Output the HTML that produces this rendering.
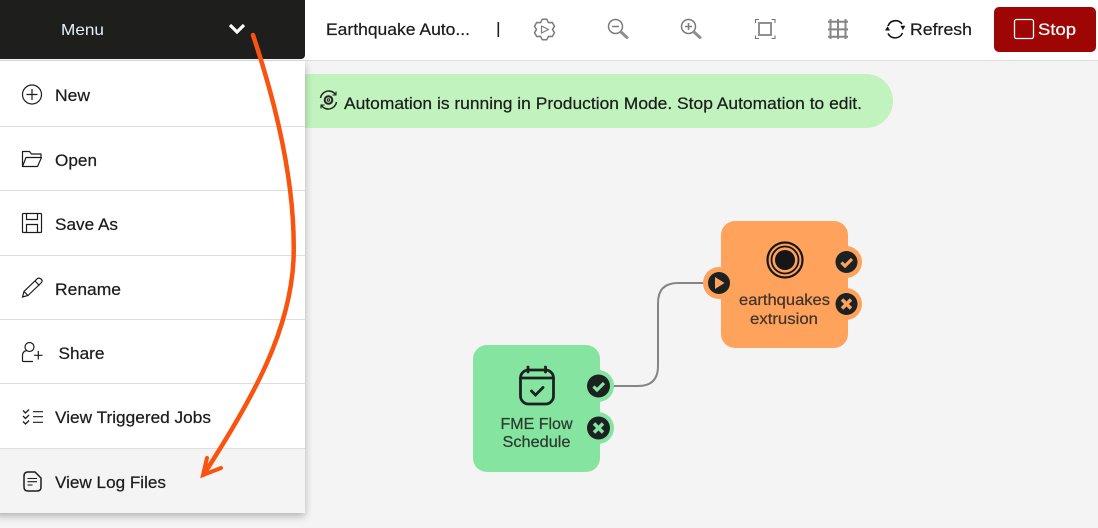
<!DOCTYPE html>
<html><head><meta charset="utf-8"><style>
html,body{margin:0;padding:0;background:#f4f4f4;width:1098px;height:528px;overflow:hidden}
svg{display:block;position:absolute;left:0;top:0}
text{font-family:"Liberation Sans",sans-serif;font-size:17px;fill:#1c1c1c;stroke:#1c1c1c;stroke-width:.22}
</style></head><body>
<svg width="1098" height="528" viewBox="0 0 1098 528" xmlns="http://www.w3.org/2000/svg">
<defs>
<filter id="sh" x="-10%" y="-10%" width="120%" height="120%"><feDropShadow dx="0" dy="3" stdDeviation="4" flood-color="#000" flood-opacity=".28"/></filter>
<filter id="b"><feGaussianBlur stdDeviation=".25"/></filter>
</defs>
<rect width="1098" height="528" fill="#f4f4f4"/>
<rect width="1098" height="60" fill="#fff"/>
<rect y="60" width="1098" height="1" fill="#dedede"/>
<!-- banner -->
<rect x="280" y="74" width="613" height="54" rx="27" fill="#c0f3bd"/>
<g fill="none" stroke="#222" stroke-width="1.3">
<circle cx="328.500" cy="100" r="3.800" stroke-width="2"/><circle cx="328.500" cy="100" r="1.200" stroke-width="1"/>
<path d="M320.500 98a8.300 8.300 0 0 1 15-3.500M336.500 102a8.300 8.300 0 0 1-15 3.500" stroke-width="1.500"/>
<path d="M336 91.500v3.500h-3.500M321 108.500v-3.500h3.500" stroke-width="1.100"/>
</g>
<text x="344" y="109" textLength="518" lengthAdjust="spacingAndGlyphs">Automation is running in Production Mode. Stop Automation to edit.</text>
<!-- toolbar -->
<text x="326" y="35" textLength="144" lengthAdjust="spacingAndGlyphs">Earthquake Auto...</text>
<rect x="497.500" y="22" width="1.600" height="15" fill="#222"/>
<g fill="none" stroke="#7b7b7b" stroke-width="1.500">
<path d="M546.700 19.200L542.300 19.200L540.500 22.600L536.700 22.500L534.500 26.300L536.500 29.500L534.500 32.700L536.700 36.500L540.500 36.400L542.300 39.800L546.700 39.800L548.500 36.400L552.300 36.500L554.500 32.700L552.500 29.500L554.500 26.300L552.300 22.500L548.500 22.600Z" stroke-linejoin="round"/>
<path d="M541.500 26v7l7-3.500z" stroke-width="1.200" stroke-linejoin="round"/>
<circle cx="615.500" cy="26.500" r="7"/><path d="M612 26.500h7"/>
<path d="M621 32l6 5.500" stroke-width="3" stroke-linecap="round" stroke="#8e8e8e"/>
<circle cx="688.500" cy="26.500" r="7"/><path d="M685 26.500h7M688.500 23v7"/>
<path d="M694 32l6 5.500" stroke-width="3" stroke-linecap="round" stroke="#8e8e8e"/>
<rect x="759" y="23" width="12" height="12" stroke-width="2" stroke="#909090"/>
<path d="M755.500 23v-3.500h3.500M771.500 19.500h3.500v3.500M775 35.500v3h-3.500M759 38.500h-3.500v-3" stroke-width="1.100" stroke="#6b7480"/>
<path d="M830.500 19v20M838 19v20M845.500 19v20M828 21.800h20M828 29.400h20M828 36.800h20" stroke-width="2" stroke="#868686"/>
</g>
<g fill="none" stroke="#111" stroke-width="1.600">
<path d="M888 26a8 8 0 0 1 14-2"/><path d="M902.500 33a8 8 0 0 1-14.500 .5"/>
</g>
<path d="M900.500 25.800h4.800l-2.400 4.500zM885 30.500h5l-2.400-4.200z" fill="#111"/>
<text x="910" y="35" textLength="62" lengthAdjust="spacingAndGlyphs">Refresh</text>
<rect x="994" y="7" width="102" height="45" rx="5" fill="#9e0505"/>
<rect x="1014.500" y="19.500" width="19" height="19" rx="2" fill="none" stroke="#fff" stroke-width="1.300"/>
<text x="1038" y="35" textLength="38" lengthAdjust="spacingAndGlyphs" style="fill:#fff;stroke:#fff">Stop</text>
<!-- connector -->
<path d="M612 386H638Q658 386 658 366V303Q658 283 678 283H706" fill="none" stroke="#858585" stroke-width="2"/>
<!-- green node -->
<g filter="url(#b)">
<circle cx="598" cy="386" r="16" fill="#85e49f"/><circle cx="598" cy="428" r="16" fill="#85e49f"/>
<rect x="473" y="345" width="127" height="127" rx="14" fill="#85e49f"/>
<circle cx="598.500" cy="386" r="11.500" fill="#1e2220"/><circle cx="598.500" cy="428" r="11.500" fill="#1e2220"/>
<path d="M593.500 386.500l3.500 3.500 7-7" fill="none" stroke="#85e49f" stroke-width="3.200"/>
<path d="M594 423.500l9 9M603 423.500l-9 9" fill="none" stroke="#85e49f" stroke-width="3.500"/>
<g fill="none" stroke="#1e2220" stroke-width="2.800" stroke-linecap="round">
<rect x="520.500" y="370" width="33" height="34" rx="8"/>
<path d="M528 367v5M545.500 367v5M520.500 378h33" />
<path d="M531.500 391l4 4 7.500-7.500"/>
</g>
<text x="536.500" y="429" text-anchor="middle" textLength="72" lengthAdjust="spacingAndGlyphs" style="fill:#2a3a30;stroke:#2a3a30;font-size:16px">FME Flow</text>
<text x="536.500" y="447" text-anchor="middle" textLength="68" lengthAdjust="spacingAndGlyphs" style="fill:#2a3a30;stroke:#2a3a30;font-size:16px">Schedule</text>
<!-- orange node -->
<circle cx="846" cy="262" r="16" fill="#ffa25b"/><circle cx="846" cy="304" r="16" fill="#ffa25b"/><circle cx="719" cy="283" r="16" fill="#ffa25b"/>
<rect x="721" y="221" width="127" height="127" rx="14" fill="#ffa25b"/>
<circle cx="846.500" cy="262" r="11" fill="#1e2220"/><circle cx="846.500" cy="304" r="11" fill="#1e2220"/><circle cx="719" cy="283" r="11" fill="#1e2220"/>
<path d="M841.500 262.500l3.500 3.500 7-7" fill="none" stroke="#ffa25b" stroke-width="3.200"/>
<path d="M842 299.500l9 9M851 299.500l-9 9" fill="none" stroke="#ffa25b" stroke-width="3.500"/>
<path d="M715 277v12l9.500-6z" fill="#ffa25b"/>
<circle cx="785" cy="260" r="10" fill="#141414"/>
<circle cx="785" cy="260" r="13.500" fill="none" stroke="#141414" stroke-width="1.800"/>
<circle cx="785" cy="260" r="17.500" fill="none" stroke="#141414" stroke-width="2.200"/>
<text x="784.500" y="305" text-anchor="middle" textLength="91" lengthAdjust="spacingAndGlyphs" style="fill:#40342a;stroke:#40342a;font-size:16px">earthquakes</text>
<text x="784" y="324" text-anchor="middle" textLength="68" lengthAdjust="spacingAndGlyphs" style="fill:#40342a;stroke:#40342a;font-size:16px">extrusion</text>
</g>
<!-- menu panel -->
<rect x="-6" y="61" width="311" height="452" fill="#fff" filter="url(#sh)"/>
<rect x="0" y="449" width="305" height="64" fill="#f4f4f4"/>
<g fill="#dedede">
<rect y="126" width="305" height="1"/><rect y="190" width="305" height="1"/><rect y="255" width="305" height="1"/>
<rect y="319" width="305" height="1"/><rect y="383" width="305" height="1"/><rect y="448" width="305" height="1"/>
</g>
<rect x="-4" y="-4" width="309" height="63" rx="4" fill="#1e1e1c"/>
<text x="61" y="35" textLength="43" lengthAdjust="spacingAndGlyphs" style="fill:#e4f0fa;stroke:none;font-size:16px">Menu</text>
<path d="M230 25l7 7 7-7" fill="none" stroke="#fff" stroke-width="3.200"/>
<g>
<text x="55" y="101" textLength="35" lengthAdjust="spacingAndGlyphs">New</text>
<text x="55" y="166" textLength="42" lengthAdjust="spacingAndGlyphs">Open</text>
<text x="55" y="230" textLength="63" lengthAdjust="spacingAndGlyphs">Save As</text>
<text x="55" y="295" textLength="66" lengthAdjust="spacingAndGlyphs">Rename</text>
<text x="58.500" y="359" textLength="46" lengthAdjust="spacingAndGlyphs">Share</text>
<text x="55" y="423" textLength="156" lengthAdjust="spacingAndGlyphs">View Triggered Jobs</text>
<text x="55" y="488" textLength="111" lengthAdjust="spacingAndGlyphs">View Log Files</text>
</g>
<g fill="none" stroke="#1c1c1c" stroke-width="1.200">
<circle cx="32" cy="94.500" r="9.500"/><path d="M26.500 94.500h11M32 89v11"/>
<path d="M22.500 166.500V151.500h7l2 2.500h9.500v3.500M22.500 166.500h15l4-9h-15.500z" stroke-linejoin="round"/>
<rect x="22.500" y="213.500" width="19" height="19" rx="1"/><path d="M26.500 213.500v6h11v-6M26.500 232.500v-8h11v8"/>
<path d="M22.500 297l1.500-5.500 13.500-13q1.500-1 3.500 .5t.5 3.500l-13.500 13zM35 281l4.500 4.500M24 291.500l4 4"/>
<circle cx="29.500" cy="347" r="4.500"/><path d="M22.500 361.500v-6q0-4 4-5M22.500 361.500h10.500M38.300 351v8.500M34 355.300h8.500"/>
<path d="M33 411.700h10M33 416.700h10M33 422.300h10"/>
<path d="M23 410.500l2.500 2.500 3.500-3.500M23 416l2.500 2.500 3.500-3.500M23 421.500l2.500 2.500 3.500-3.500" stroke-width="1.300"/>
<path d="M24 476q0-4 4-4h7l6 6v9q0 4-4 4h-9q-4 0-4-4z" stroke-width="1.500"/>
<path d="M27.500 478.500h9.500M27.500 481.700h9.500M27.500 485h5" stroke-width="1.100"/>
</g>
<!-- arrow -->
<path d="M253 35C278 110 296 190 293.500 260C290 330 255 395 204 474" fill="none" stroke="#f9540f" stroke-width="4.500" stroke-linecap="round"/>
<path d="M207 458L203 475L221 468" fill="none" stroke="#f9540f" stroke-width="4" stroke-linejoin="miter" stroke-linecap="round"/>
</svg>
</body></html>
